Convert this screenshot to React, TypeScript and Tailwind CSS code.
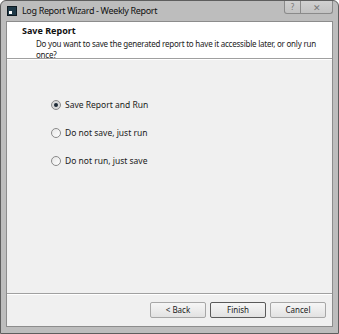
import React from "react";

const font = { fontFamily: '"Noto Sans", "Open Sans", sans-serif' };

const Radio = ({ checked, label }: { checked?: boolean; label: string }) => (
  <div className="flex items-center h-[12px]">
    <span
      className={
        "w-[10px] h-[10px] rounded-full border border-[#8a8a8a] flex items-center justify-center " +
        (checked ? "bg-[#d8d8d8]" : "bg-gradient-to-br from-[#e6e6e6] to-white")
      }
    >
      {checked && <span className="w-[4px] h-[4px] rounded-full bg-[#1d2a36]" />}
    </span>
    <span className="ml-[4px] text-[8.5px] text-[#1a1a1a] leading-none">{label}</span>
  </div>
);

const Button = ({ label, focused }: { label: string; focused?: boolean }) => (
  <button
    className={
      "w-[56px] h-[16px] rounded-[2px] bg-gradient-to-b from-[#f6f6f6] to-[#e2e2e2] text-[8px] text-[#1a1a1a] leading-none " +
      (focused ? "border border-[#5a5a5a]" : "border border-[#a7a7a7]")
    }
  >
    {label}
  </button>
);

export default function App() {
  return (
    <div className="w-[339px] h-[334px] bg-white" style={font}>
      <div className="w-full h-full flex flex-col border border-[#5e5e5e] rounded-t-[6px] bg-[#bdbdbd]">
        {/* title bar */}
        <div className="h-[20px] flex items-start shrink-0">
          <div className="flex items-center h-[19px] pl-[6px]">
            <div className="w-[10px] h-[10px] bg-[#1f3a48] border border-[#0e1a22] flex items-end justify-start p-[1px]">
              <div className="w-[3px] h-[3px] bg-white" />
            </div>
            <span className="ml-[5px] text-[9px] tracking-[-0.35px] text-[#111]">Log Report Wizard - Weekly Report</span>
          </div>
          <div className="ml-auto mr-[5px] flex">
            <div className="w-[17px] h-[13px] border border-t-0 border-[#8a8a8a] rounded-bl-[3px] bg-gradient-to-b from-[#d0d0d0] to-[#c2c2c2] flex items-center justify-center text-[8px] text-[#777] leading-none">
              ?
            </div>
            <div className="w-[32px] h-[13px] border border-t-0 border-l-0 border-[#8a8a8a] rounded-br-[3px] bg-gradient-to-b from-[#d0d0d0] to-[#c2c2c2] flex items-center justify-center text-[9px] text-[#777] leading-none">
              ✕
            </div>
          </div>
        </div>
        {/* client */}
        <div className="flex-1 mx-[5px] mb-[6px] border border-[#8c8c8c] flex flex-col bg-[#f0f0f0]">
          <div className="h-[37px] bg-white border-b border-[#a0a0a0] pl-[15px] pt-[3px]">
            <div className="text-[9px] font-bold text-[#111] leading-[12.5px]">Save Report</div>
            <div className="pl-[14px] text-[8px] tracking-[-0.22px] text-[#222] leading-[11px] whitespace-nowrap">
              <div>Do you want to save the generated report to have it accessible later, or only run</div>
              <div>once?</div>
            </div>
          </div>
          <div className="flex-1 border-t border-white flex flex-col gap-[16px] pl-[44px] pt-[39px]">
            <Radio checked label="Save Report and Run" />
            <Radio label="Do not save, just run" />
            <Radio label="Do not run, just save" />
          </div>
          <div className="h-[33px] border-t border-[#a0a0a0] shadow-[inset_0_1px_0_#fff] flex items-center justify-end gap-[4px] pr-[6px]">
            <Button label="< Back" />
            <Button label="Finish" focused />
            <Button label="Cancel" />
          </div>
        </div>
      </div>
    </div>
  );
}
